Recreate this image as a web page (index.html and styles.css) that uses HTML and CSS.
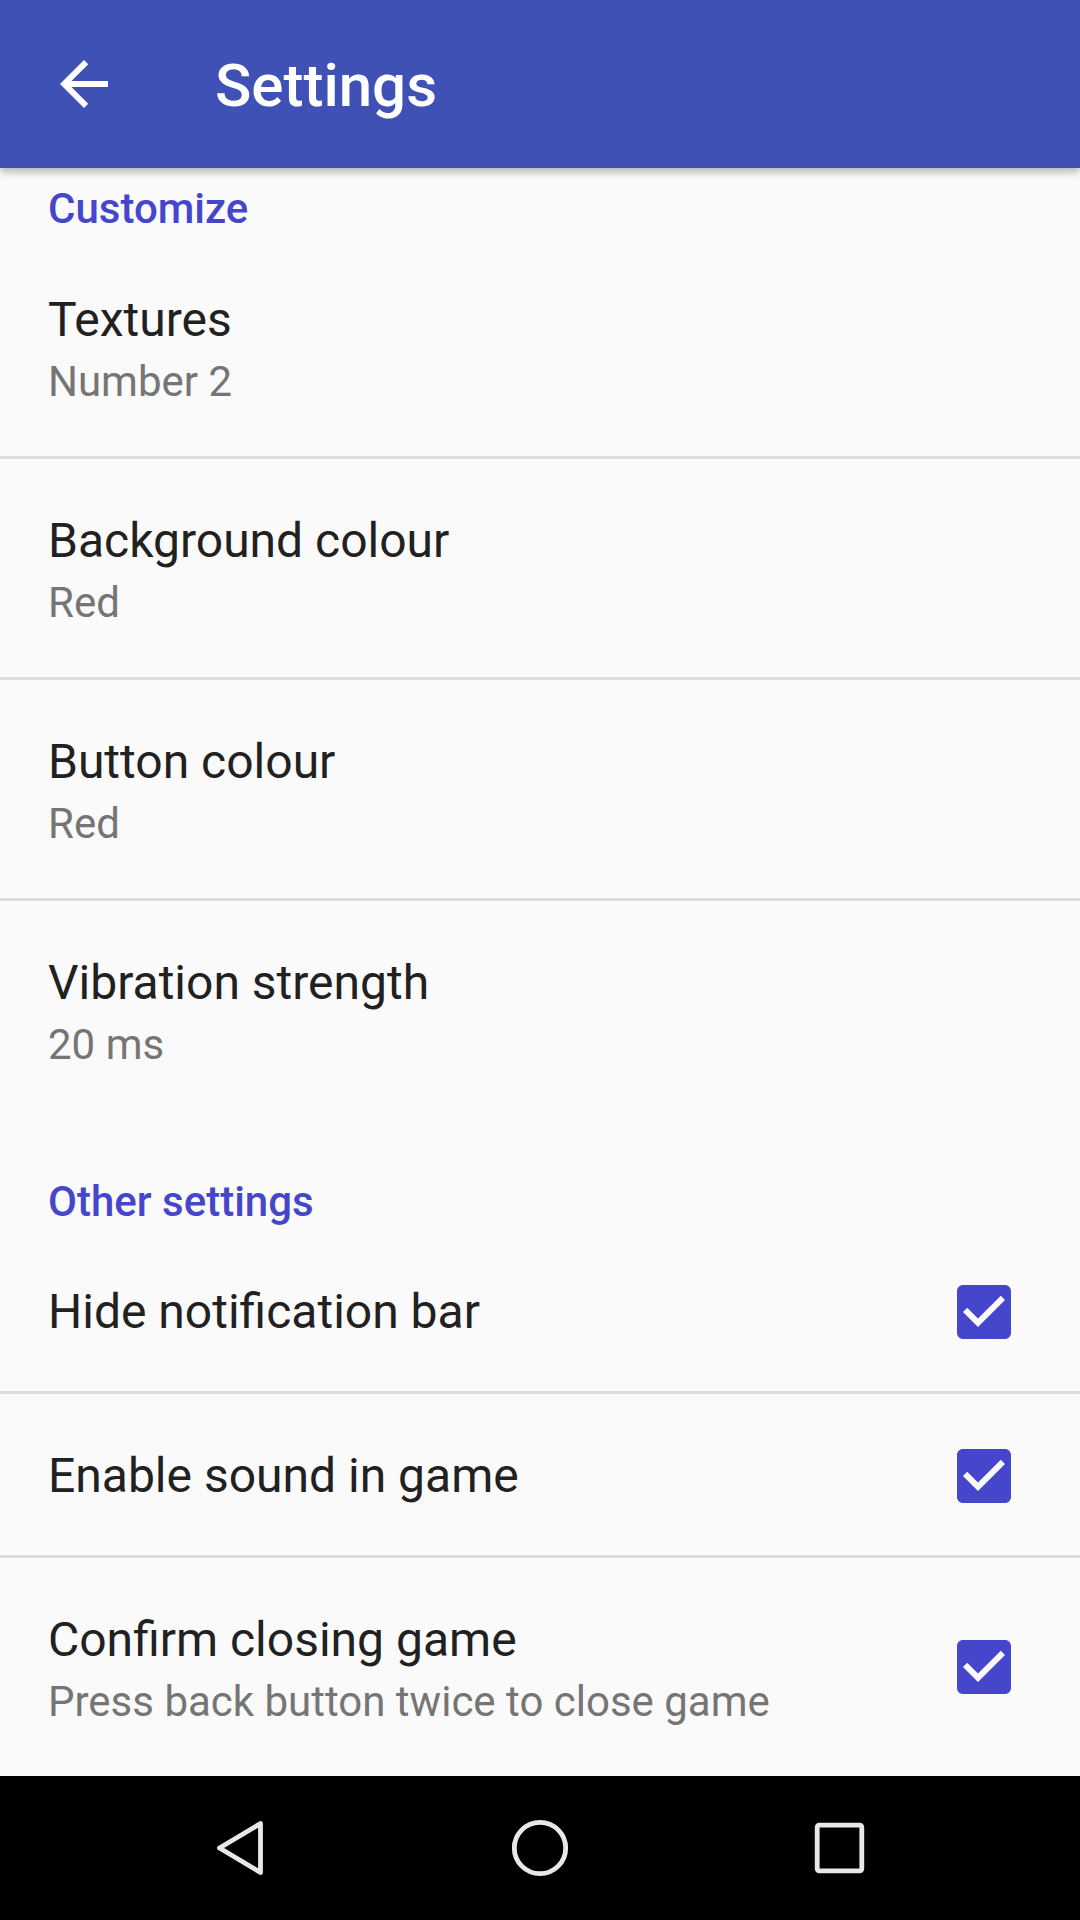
FILE: index.html
```html
<!DOCTYPE html>
<html lang="en">
<head>
<meta charset="utf-8">
<title>Settings</title>
<link rel="stylesheet" href="styles.css">
</head>
<body>
<div class="screen">
  <header class="appbar">
    <button class="appbar__nav" aria-label="Back">
      <svg viewBox="0 0 24 24" width="72" height="72"><path d="M20 11H7.83l5.59-5.59L12 4l-8 8 8 8 1.41-1.41L7.83 13H20v-2z"/></svg>
    </button>
    <h1 class="appbar__title">Settings</h1>
  </header>

  <main class="prefs">
    <div class="category category--first">Customize</div>

    <div class="pref pref--divided">
      <div class="pref__text pref__text--two">
        <div class="pref__title">Textures</div>
        <div class="pref__summary">Number 2</div>
      </div>
    </div>
    <div class="pref pref--divided">
      <div class="pref__text pref__text--two">
        <div class="pref__title">Background colour</div>
        <div class="pref__summary">Red</div>
      </div>
    </div>
    <div class="pref pref--divided">
      <div class="pref__text pref__text--two">
        <div class="pref__title">Button colour</div>
        <div class="pref__summary">Red</div>
      </div>
    </div>
    <div class="pref">
      <div class="pref__text pref__text--two">
        <div class="pref__title">Vibration strength</div>
        <div class="pref__summary">20 ms</div>
      </div>
    </div>

    <div class="category">Other settings</div>

    <div class="pref pref--check pref--divided">
      <div class="pref__text">
        <div class="pref__title">Hide notification bar</div>
      </div>
      <svg class="checkbox" viewBox="0 0 24 24" width="72" height="72"><path d="M19 3H5c-1.11 0-2 .9-2 2v14c0 1.1.89 2 2 2h14c1.11 0 2-.9 2-2V5c0-1.1-.89-2-2-2zm-9 14l-5-5 1.41-1.41L10 14.17l7.59-7.59L19 8l-9 9z"/></svg>
    </div>
    <div class="pref pref--check pref--divided">
      <div class="pref__text">
        <div class="pref__title">Enable sound in game</div>
      </div>
      <svg class="checkbox" viewBox="0 0 24 24" width="72" height="72"><path d="M19 3H5c-1.11 0-2 .9-2 2v14c0 1.1.89 2 2 2h14c1.11 0 2-.9 2-2V5c0-1.1-.89-2-2-2zm-9 14l-5-5 1.41-1.41L10 14.17l7.59-7.59L19 8l-9 9z"/></svg>
    </div>
    <div class="pref">
      <div class="pref__text pref__text--two">
        <div class="pref__title">Confirm closing game</div>
        <div class="pref__summary">Press back button twice to close game</div>
      </div>
      <svg class="checkbox" viewBox="0 0 24 24" width="72" height="72"><path d="M19 3H5c-1.11 0-2 .9-2 2v14c0 1.1.89 2 2 2h14c1.11 0 2-.9 2-2V5c0-1.1-.89-2-2-2zm-9 14l-5-5 1.41-1.41L10 14.17l7.59-7.59L19 8l-9 9z"/></svg>
    </div>
  </main>

  <nav class="navbar">
    <button class="navbar__btn" aria-label="Back">
      <svg viewBox="0 0 60 60" width="60" height="60"><path class="navbar__stroke" d="M49.5 5.5 L8.5 30 L49.5 54.5 Z"/></svg>
    </button>
    <button class="navbar__btn" aria-label="Home">
      <svg viewBox="0 0 60 60" width="60" height="60"><circle class="navbar__stroke" cx="30" cy="30" r="25.7"/></svg>
    </button>
    <button class="navbar__btn" aria-label="Recents">
      <svg viewBox="0 0 60 60" width="60" height="60"><rect class="navbar__stroke" x="8.2" y="7.2" width="44.6" height="45.6" rx="2"/></svg>
    </button>
  </nav>
</div>
</body>
</html>
```

FILE: styles.css
```css
* {
  box-sizing: border-box;
}

html, body {
  margin: 0;
  padding: 0;
  background: #fafafa;
}

body {
  font-family: Roboto, "Liberation Sans", Arial, sans-serif;
  -webkit-font-smoothing: antialiased;
}

.screen {
  width: 1080px;
  height: 1920px;
  display: flex;
  flex-direction: column;
  overflow: hidden;
  background: #fafafa;
}

/* App bar */
.appbar {
  flex: none;
  height: 168px;
  background: #3f51b5;
  display: flex;
  align-items: center;
  padding-left: 48px;
  box-shadow: 0 4px 8px rgba(0, 0, 0, 0.28);
  position: relative;
  z-index: 2;
}

.appbar__nav {
  width: 72px;
  height: 72px;
  padding: 0;
  margin: 0;
  border: 0;
  background: transparent;
  display: flex;
}

.appbar__nav svg {
  fill: #ffffff;
}

.appbar__title {
  margin: 4px 0 0 95px;
  font-size: 60px;
  font-weight: 500;
  color: #ffffff;
  line-height: 1;
}

/* Preference list */
.prefs {
  flex: 1;
  display: flex;
  flex-direction: column;
}

.category {
  font-size: 42px;
  line-height: 42px;
  font-weight: 500;
  color: #4646cc;
  padding: 62px 48px 7px;
}

.category--first {
  padding-top: 20px;
  padding-bottom: 8px;
}

.pref {
  display: flex;
  align-items: center;
  padding: 0 60px 0 48px;
}

.pref--divided {
  border-bottom: 3px solid #dcdcdc;
}

.pref--check {
  height: 164px;
  padding-top: 2px;
}

.pref__text {
  flex: 1;
  min-width: 0;
}

.pref__text--two {
  padding: 52px 0 42px;
}

.pref__title {
  font-size: 48px;
  line-height: 60px;
  color: #212121;
}

.pref__summary {
  font-size: 42px;
  line-height: 64px;
  color: #757575;
}

.checkbox {
  flex: none;
  fill: #4646cc;
}

/* Navigation bar */
.navbar {
  flex: none;
  height: 144px;
  background: #000000;
  display: flex;
  justify-content: center;
  align-items: center;
}

.navbar__btn {
  width: 299px;
  height: 144px;
  padding: 0;
  margin: 0;
  border: 0;
  background: transparent;
  display: flex;
  align-items: center;
  justify-content: center;
}

.navbar__stroke {
  fill: none;
  stroke: #e8e8e8;
  stroke-width: 4.8;
  stroke-linejoin: round;
}
```
